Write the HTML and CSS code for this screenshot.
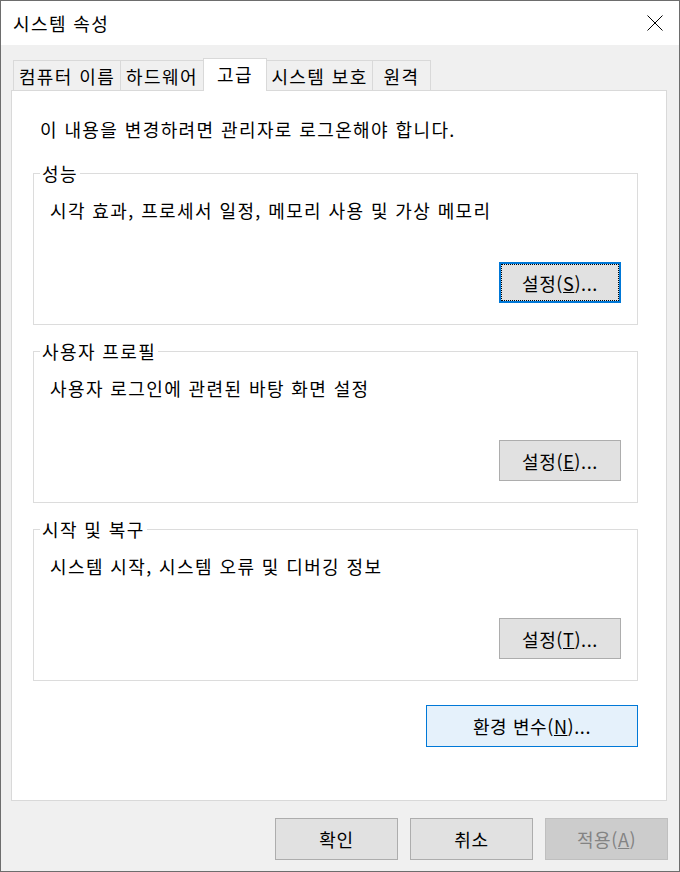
FILE: index.html
```html
<!DOCTYPE html>
<html lang="ko">
<head>
<meta charset="utf-8">
<title>시스템 속성</title>
<link rel="stylesheet" href="styles.css">
</head>
<body>
<div class="window">
  <div class="titlebar">
    <span class="title">시스템 속성</span>
    <svg class="close" width="16" height="16" viewBox="0 0 16 16" aria-label="닫기">
      <path d="M0.5 0.5L15.5 15.5M15.5 0.5L0.5 15.5" stroke="#000" stroke-width="1" fill="none"/>
    </svg>
  </div>
  <div class="client">
    <div class="tabs">
      <div class="tab tab-1">컴퓨터 이름</div>
      <div class="tab tab-2">하드웨어</div>
      <div class="tab tab-3 selected">고급</div>
      <div class="tab tab-4">시스템 보호</div>
      <div class="tab tab-5">원격</div>
    </div>
    <div class="panel">
      <p class="intro">이 내용을 변경하려면 관리자로 로그온해야 합니다.</p>
      <fieldset class="group">
        <legend>성능</legend>
        <div class="group-body">
          <p class="desc">시각 효과, 프로세서 일정, 메모리 사용 및 가상 메모리</p>
          <div class="group-actions"><button class="btn focused">설정(<u>S</u>)...</button></div>
        </div>
      </fieldset>
      <fieldset class="group">
        <legend>사용자 프로필</legend>
        <div class="group-body">
          <p class="desc">사용자 로그인에 관련된 바탕 화면 설정</p>
          <div class="group-actions"><button class="btn">설정(<u>E</u>)...</button></div>
        </div>
      </fieldset>
      <fieldset class="group">
        <legend>시작 및 복구</legend>
        <div class="group-body">
          <p class="desc">시스템 시작, 시스템 오류 및 디버깅 정보</p>
          <div class="group-actions"><button class="btn">설정(<u>T</u>)...</button></div>
        </div>
      </fieldset>
      <div class="env-row"><button class="btn env">환경 변수(<u>N</u>)...</button></div>
    </div>
    <div class="footer">
      <button class="btn footer-btn">확인</button>
      <button class="btn footer-btn">취소</button>
      <button class="btn footer-btn disabled">적용(<u>A</u>)</button>
    </div>
  </div>
</div>
</body>
</html>
```
FILE: styles.css
```css
* { box-sizing: border-box; }
html, body { margin: 0; padding: 0; }
body {
  width: 680px;
  height: 872px;
  font-family: "Noto Sans CJK KR", "Noto Sans", sans-serif;
  font-size: 18px;
  letter-spacing: 1.4px;
  color: #000;
  background: #f0f0f0;
}
.window {
  width: 680px;
  height: 872px;
  border: 1px solid #6d6d6d;
  display: flex;
  flex-direction: column;
}
.titlebar {
  height: 44px;
  flex: none;
  background: #fff;
  display: flex;
  align-items: center;
  justify-content: space-between;
  padding-left: 12px;
}
.title { line-height: 24px; }
.close { margin-right: 16px; display: block; }
.client {
  flex: 1;
  background: #f0f0f0;
  padding: 13px 12px 0 10px;
  display: flex;
  flex-direction: column;
}
.tabs {
  display: flex;
  align-items: flex-end;
  margin-left: 2px;
}
.tab {
  height: 30px;
  border: 1px solid #d9d9d9;
  border-bottom: none;
  background: #f0f0f0;
  display: flex;
  align-items: center;
  justify-content: center;
  line-height: 24px;
  margin-left: -1px;
  white-space: nowrap;
}
.tab-1 { width: 108px; margin-left: 0; }
.tab-2 { width: 84px; }
.tab-3 { width: 64px; }
.tab-4 { width: 107px; }
.tab-5 { width: 59px; }
.tab.selected {
  height: 33px;
  background: #fff;
  margin-bottom: -1px;
  position: relative;
  z-index: 1;
  padding-bottom: 2px;
}
.panel {
  height: 711px;
  background: #fff;
  border: 1px solid #d9d9d9;
  padding: 26px 0 0 0;
  display: flex;
  flex-direction: column;
}
.intro {
  margin: 0 0 0 28px;
  line-height: 24px;
}
.group {
  margin: 14px 28px 0 21px;
  padding: 0;
  border: 1px solid #dcdcdc;
  min-width: 0;
}
.intro + .group { margin-top: 20px; }
.group legend {
  margin-left: 6px;
  padding: 0 2px;
  line-height: 24px;
}
.group-body {
  padding: 13px 16px 21px 16px;
}
.desc {
  margin: 0;
  line-height: 24px;
}
.group-actions {
  display: flex;
  justify-content: flex-end;
  margin-top: 40px;
}
.btn {
  font-family: inherit;
  font-size: 18px;
  letter-spacing: 0.6px;
  color: #000;
  background: #e1e1e1;
  border: 1px solid #adadad;
  padding: 0;
  margin: 0;
  width: 122px;
  height: 41px;
  display: flex;
  align-items: center;
  justify-content: center;
  line-height: 24px;
  position: relative;
}
.btn.focused { border: 2px solid #0078d7; }
.btn.focused::after {
  content: "";
  position: absolute;
  inset: 0;
  border: 1px dotted #000;
}
.env-row {
  display: flex;
  justify-content: flex-end;
  margin: 24px 28px 0 0;
}
.btn.env {
  width: 212px;
  height: 42px;
  background: #e5f1fb;
  border-color: #0078d7;
}
.footer {
  display: flex;
  justify-content: flex-end;
  gap: 12px;
  padding: 17px 0 0 0;
  margin-right: -1px;
}
.btn.footer-btn {
  width: 123px;
  height: 42px;
}
.btn.disabled {
  background: #cccccc;
  border-color: #bfbfbf;
  color: #838383;
}
```
